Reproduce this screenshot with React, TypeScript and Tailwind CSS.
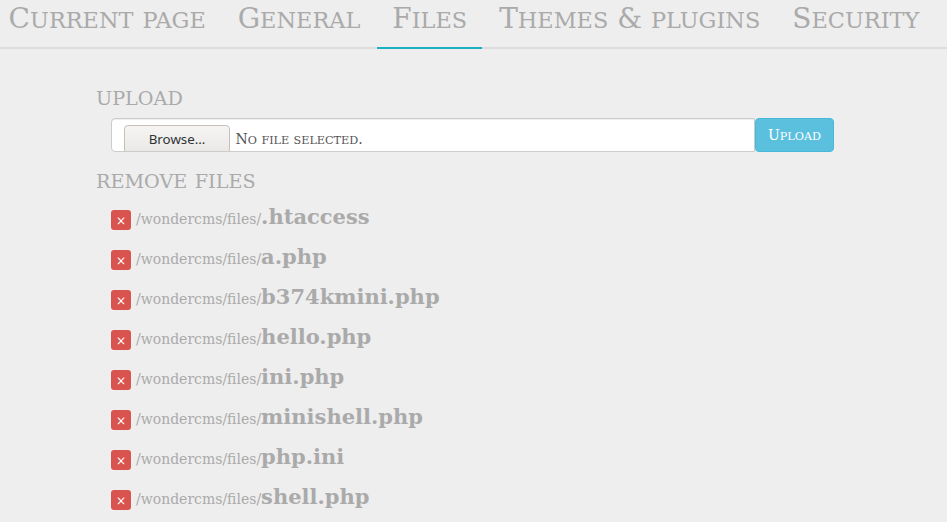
import React from "react";

const tabs = ["Current page", "General", "Files", "Themes & plugins", "Security"];
const files = [".htaccess", "a.php", "b374kmini.php", "hello.php", "ini.php", "minishell.php", "php.ini", "shell.php"];

// Small capitals drawn at 80% of the font size.
function SmallCaps({ text }: { text: string }) {
  return (
    <>
      {text.split(/([a-z]+)/).map((part, i) =>
        /^[a-z]/.test(part) ? (
          <span key={i} className="text-[0.8em] uppercase">{part}</span>
        ) : (
          part
        )
      )}
    </>
  );
}

export default function App() {
  return (
    <div className="h-[522px] w-[947px] overflow-hidden bg-[#eeeeee] font-['DejaVu_Serif',serif] text-[#aaaaaa]">
      <nav className="flex h-[49px] gap-[2px] border-b-2 border-[#dddddd] text-[28px] leading-[37px]">
        {tabs.map((t) => (
          <a
            key={t}
            className={
              "h-[49px] shrink-0 whitespace-pre border-b-2 " +
              (t === "Files"
                ? "border-[#1ab0bf] pl-[15.5px] pr-[14.5px]"
                : t === "Current page"
                  ? "border-transparent pl-[8.6px] pr-[14.4px]"
                  : "border-transparent pl-[15.5px] pr-[14.5px]")
            }
          >
            <SmallCaps text={t} />
          </a>
        ))}
      </nav>
      <main className="pl-[96px]">
        <h2 className="mt-[37px] h-[32px] text-[19.2px] leading-[25px]">UPLOAD</h2>
        <div className="ml-[15px] flex h-[34px] w-[723px]">
          <div className="flex w-[644px] shrink-0 overflow-hidden rounded-l-[4px] border border-[#cccccc] bg-white pl-[12px] pt-[6px] shadow-[inset_0_1px_1px_rgba(0,0,0,0.075)]">
            <button className="h-[29px] w-[106px] shrink-0 rounded-[4px] border border-[#c6c0ba] bg-linear-to-b from-[#f6f5f4] to-[#e9e8e6] font-['Noto_Sans',sans-serif] text-[13.33px] text-[#2e3436]">Browse…</button>
            <span className="ml-[5.5px] whitespace-pre text-[14px] leading-[28px] text-[#555555]"><SmallCaps text="No file selected." /></span>
          </div>
          <button className="w-[79px] rounded-[4px] border border-[#46b8da] bg-[#5bc0de] text-[14px] text-white"><SmallCaps text="Upload" /></button>
        </div>
        <h2 className="mt-[17px] h-[31px] text-[19.2px] leading-[25px] [word-spacing:1.3px]">REMOVE FILES</h2>
        <ul className="ml-[15px]">
          {files.map((f) => (
            <li key={f} className="flex h-[40px] items-start">
              <button className="mt-[10px] h-[20px] w-[20px] rounded-[3px] bg-[#d9534f] pt-px text-[12px] leading-[20px] text-white">×</button>
              <span className="ml-[5px] whitespace-nowrap text-[14px] leading-[34px]">
                /wondercms/files/<b className="text-[21px]">{f}</b>
              </span>
            </li>
          ))}
        </ul>
      </main>
    </div>
  );
}
